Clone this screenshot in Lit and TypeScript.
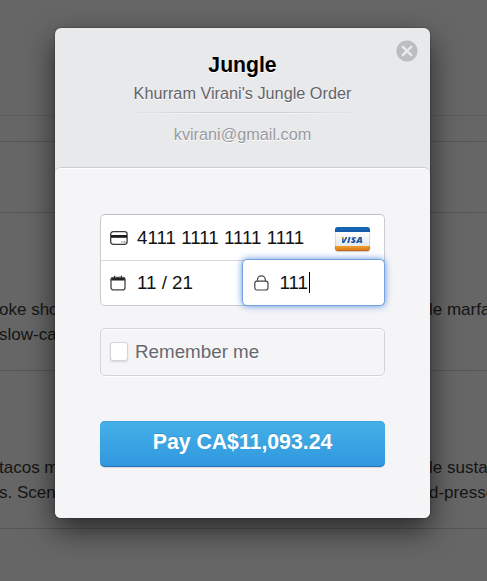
import { LitElement, html, css, svg } from "lit";
import { customElement, property } from "lit/decorators.js";

const cardIcon = svg`<svg width="18" height="14" viewBox="0 0 18 14">
  <rect x=".7" y=".7" width="16.400" height="12.600" rx="2.500" fill="none" stroke="#3a3a3a" stroke-width="1.300"/>
  <path d="M1 4h16v2.800H1z" fill="#1c1c1c"/><path d="M11.300 10.500h1.200v1.100h-1.200zm2.200 0h1.900v1.100h-1.900z" fill="#555"/></svg>`;

const calendarIcon = svg`<svg width="16" height="16" viewBox="0 0 16 16">
  <path d="M3 2h10a2.300 2.300 0 0 1 2.300 2.300V5.500H.7V4.300A2.300 2.300 0 0 1 3 2z" fill="#222"/>
  <rect x="1" y="2.400" width="14" height="12.500" rx="2.500" fill="none" stroke="#444" stroke-width="1.300"/>
  <path d="M4 .8h1.200v2H4zm6.800 0H12v2h-1.200z" fill="#222"/><path d="M5.800 1.500v1.200M10.200 1.500v1.200M3.300 1.500v1.200M12.700 1.500v1.200" stroke="#fff" stroke-width=".5"/></svg>`;

const lockIcon = svg`<svg width="15" height="16" viewBox="0 0 15 16">
  <rect x=".8" y="6.100" width="13.200" height="8.900" rx="2.200" fill="none" stroke="#444" stroke-width="1.200"/>
  <path d="M3.500 6V4.800a3.900 3.900 0 0 1 7.800 0V6" fill="none" stroke="#444" stroke-width="1.200"/></svg>`;

const closeIcon = svg`<svg width="22" height="22" viewBox="0 0 22 22">
  <circle cx="11" cy="11" r="10.600" fill="#bcbdbf"/>
  <path d="M6.800 6.800l8.400 8.400M15.200 6.800l-8.400 8.400" stroke="#e8e9eb" stroke-width="2.600" stroke-linecap="round"/></svg>`;

@customElement("product-row")
class ProductRow extends LitElement {
  @property({ attribute: false }) left: string[] = [];
  @property({ attribute: false }) right: string[] = [];
  static styles = css`
    :host { display: flex; justify-content: space-between; box-sizing: border-box; height: 158px;
      border-top: 1px solid #565656; padding-top: 84px; overflow: hidden; }
    .copy { width: 58px; line-height: 25px; white-space: nowrap; }
    .copy:first-child { text-indent: -1px; }
    .line { display: block; }
  `;
  render() {
    return html`${[this.left, this.right].map(
      (col) => html`<div class="copy">${col.map((t) => html`<span class="line">${t}</span>`)}</div>`
    )}`;
  }
}

@customElement("app-root")
class AppRoot extends LitElement {
  static styles = css`
    :host { display: block; position: relative; width: 487px; height: 581px; overflow: hidden;
      background: #666; font-family: "Liberation Sans", Arial, sans-serif; color: #151515; }
    * { box-sizing: border-box; }
    .page { font-size: 17px; }
    .top { height: 116px; border-bottom: 1px solid #5d5d5d; }
    .bar { height: 25px; }
    .heading { height: 71px; border-top: 1px solid #565656; }
    .end { border-top: 1px solid #565656; }
    .modal { position: absolute; left: 55px; top: 28px; width: 375px; height: 490px; border-radius: 6px;
      background: #e8e9eb; display: flex; flex-direction: column;
      box-shadow: 0 12px 30px rgba(0,0,0,.6), 0 0 2px rgba(0,0,0,.45); }
    .header { height: 140px; padding-top: 24px; text-align: center; text-shadow: 0 1px 0 #fff; }
    .title { margin: 0; font-size: 21.200px; line-height: 26px; font-weight: bold; color: #000; }
    .description { font-size: 16.250px; line-height: 20px; margin-top: 5px; color: #63646b; }
    .rule { width: 240px; height: 2px; margin: 9px auto 0;
      background: linear-gradient(#d0d1d3 50%, #f3f4f5 50%);
      -webkit-mask-image: linear-gradient(90deg, transparent, #000 30%, #000 70%, transparent); mask-image: linear-gradient(90deg, transparent, #000 30%, #000 70%, transparent); }
    .email { font-size: 16.250px; line-height: 20px; margin-top: 10px; color: #999a9f; }
    .close { position: absolute; right: 12.500px; top: 11.500px; width: 22px; height: 22px; padding: 0; border: 0; background: none; }
    svg { display: block; flex: none; }
    .body { flex: 1; padding: 45px 45px 0; background: #f5f5f7; border-radius: 6px;
      border-top: 1px solid #fff; box-shadow: 0 -1px 0 #cdced0; }
    .fields { height: 92px; border: 1px solid #cbcccf; border-top-color: #c0c1c4; border-radius: 5px; background: #fff;
      display: grid; grid-template: 46px 44px / 142px 1fr; }
    .field { display: flex; align-items: center; font-size: 18.750px; color: #111; padding-left: 10px; white-space: nowrap; }
    .number { grid-column: 1 / 3; border-bottom: 1px solid #d6d7d9; padding: 0 14.500px 0 9px; }
    .number .value { margin-left: 9px; flex: 1; }
    .expiry .value { margin-left: 11px; }
    .expiry { padding-left: 9px; }
    .cvc { margin: -2px -1px -1px -1px; border: 1px solid #74a3e0; border-radius: 5px; background: #fff;
      box-shadow: 0 0 7px rgba(56,118,214,.8); padding-left: 11px; }
    .cvc .value { margin-left: 10.500px; }
    .caret { width: 1px; height: 21px; margin-left: 1px; background: #000; }
    .visa { width: 35px; height: 24px; margin-top: 3px; border-radius: 3px; display: flex; align-items: center; justify-content: center;
      background: linear-gradient(#1a6fc0 0, #1159a6 5px, #fff 5px, #e7e8eb 19px, #efa02c 19px, #d9701a);
      box-shadow: 0 1px 1px rgba(0,0,0,.2), inset 0 0 0 .5px rgba(0,0,0,.2);
      font: italic 800 9.500px "Open Sans", "Liberation Sans", sans-serif; letter-spacing: .35px; color: #1456a5; }
    .visa .v { background: linear-gradient(115deg, #ef9b28 35%, #1456a5 36%); -webkit-background-clip: text; -webkit-text-fill-color: transparent; }
    .remember { height: 48px; margin-top: 22px; border: 1px solid #d3d4d7; border-radius: 5px; display: flex; align-items: center;
      padding-left: 9px; box-shadow: 0 1px 0 #fff, inset 0 1px 0 #fff; font-size: 18.800px; color: #66676e; text-shadow: 0 1px 0 #fff; }
    .box { width: 18px; height: 19px; margin: -1px 7px 0 0; background: #fff; border: 1px solid #d3d4d6; border-radius: 3px; box-shadow: 0 1px 2px rgba(0,0,0,.12); }
    .pay { display: block; width: 285px; height: 46px; margin-top: 45px; padding: 0 0 4px; border: 0; border-radius: 5px;
      background: linear-gradient(#45b1e8, #3097de); box-shadow: inset 0 1px 0 #3da4db, inset 0 -2px 0 -1px #2375b8, 0 1px 1px rgba(0,0,0,.12);
      font: bold 21.250px "Liberation Sans", Arial, sans-serif; color: #fff; text-shadow: 0 -1px 0 rgba(0,0,0,.15); }
  `;
  render() {
    return html`
      <div class="page">
        <div class="top"></div><div class="bar"></div><div class="heading"></div>
        <product-row .left=${["oke sho", "slow-ca"]} .right=${["le marfa"]}></product-row>
        <product-row .left=${["tacos m", "s. Scen"]} .right=${["le susta", "d-presse"]}></product-row>
        <div class="end"></div>
      </div>
      <div class="modal">
        <div class="header">
          <h1 class="title">Jungle</h1>
          <div class="description">Khurram Virani's Jungle Order</div>
          <div class="rule"></div>
          <div class="email">kvirani@gmail.com</div>
        </div>
        <button class="close" aria-label="Close">${closeIcon}</button>
        <div class="body">
          <div class="fields">
            <div class="field number">${cardIcon}<span class="value">4111 1111 1111 1111</span>
              <span class="visa"><span class="v">V</span>ISA</span></div>
            <div class="field expiry">${calendarIcon}<span class="value">11 / 21</span></div>
            <div class="field cvc">${lockIcon}<span class="value">111</span><span class="caret"></span></div>
          </div>
          <div class="remember"><span class="box"></span>Remember me</div>
          <button class="pay">Pay CA$11,093.24</button>
        </div>
      </div>`;
  }
}
